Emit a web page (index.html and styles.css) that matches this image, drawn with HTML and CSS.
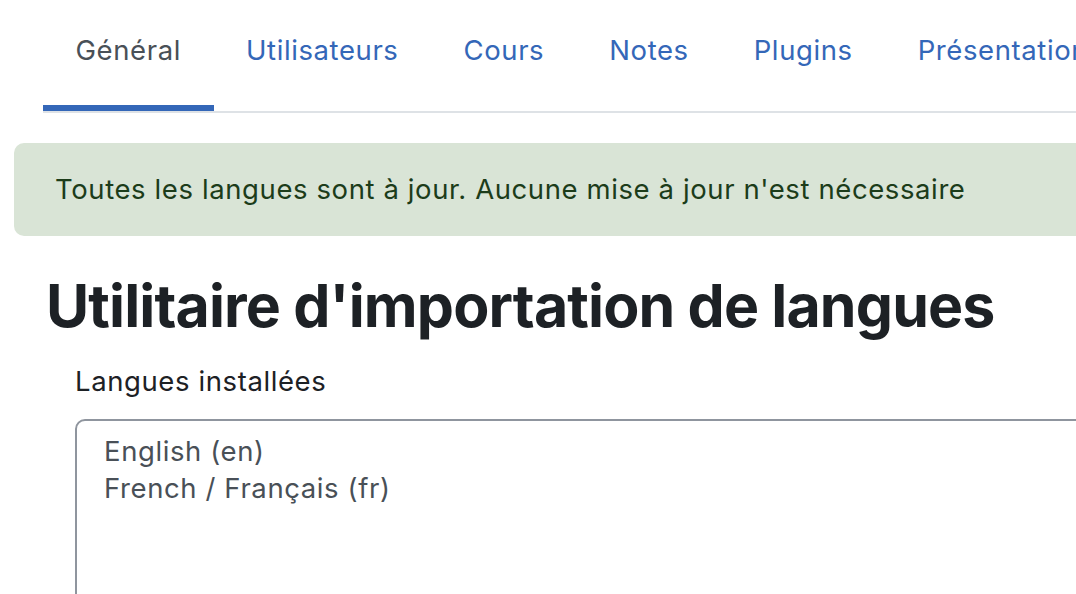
FILE: index.html
```html
<!DOCTYPE html>
<html lang="fr">

<head>
    <meta charset="UTF-8">
    <meta name="viewport" content="width=device-width, initial-scale=1.0">
    <title>Utilitaire d'importation de langues</title>
    <link rel="stylesheet" href="styles.css">
</head>

<body>
    <div class="page">
        <nav class="tabs">
            <a class="tab active" href="#">Général</a>
            <a class="tab" href="#">Utilisateurs</a>
            <a class="tab" href="#">Cours</a>
            <a class="tab" href="#">Notes</a>
            <a class="tab" href="#">Plugins</a>
            <a class="tab" href="#">Présentation</a>
        </nav>

        <div class="alert">Toutes les langues sont à jour. Aucune mise à jour n'est nécessaire</div>

        <h2 class="title">Utilitaire d'importation de langues</h2>

        <div class="field">
            <label class="label" for="installed">Langues installées</label>
            <div class="listbox" id="installed">
                <div class="option">English (en)</div>
                <div class="option">French / Français (fr)</div>
            </div>
        </div>
    </div>
</body>

</html>
```

FILE: styles.css
```css
* {
    box-sizing: border-box;
}

body {
    margin: 0;
    overflow: hidden;
    font-family: Inter, 'Liberation Sans', sans-serif;
    font-size: 27.5px;
    letter-spacing: 0.6px;
    line-height: 38px;
    color: #1d2125;
    background: #fff;
}

.page {
    width: 1300px;
}

.tabs {
    display: flex;
    margin-left: 43px;
    border-bottom: 2px solid #dee2e6;
}

.tab {
    display: block;
    padding: 31px 32.5px 36px;
    border-bottom: 6px solid transparent;
    color: #3467b8;
    text-decoration: none;
    white-space: nowrap;
}

.tab.active {
    color: #495057;
    border-bottom-color: #3467b8;
}

.alert {
    margin: 30px 0 0 14px;
    padding: 27px 41px 28px;
    background-color: #d9e4d6;
    color: #1c3c1a;
    border-radius: 10px;
}

.title {
    margin: 35px 0 0 46px;
    font-size: 59px;
    letter-spacing: -0.85px;
    line-height: 70px;
    font-weight: 700;
    color: #1d2125;
}

.field {
    margin: 21px 0 0 75px;
}

.label {
    display: block;
}

.listbox {
    margin-top: 19px;
    height: 240px;
    padding: 12px 27px;
    border: 2px solid #8f959e;
    border-radius: 10px;
    color: #495057;
}

.option {
    line-height: 37px;
}
```
